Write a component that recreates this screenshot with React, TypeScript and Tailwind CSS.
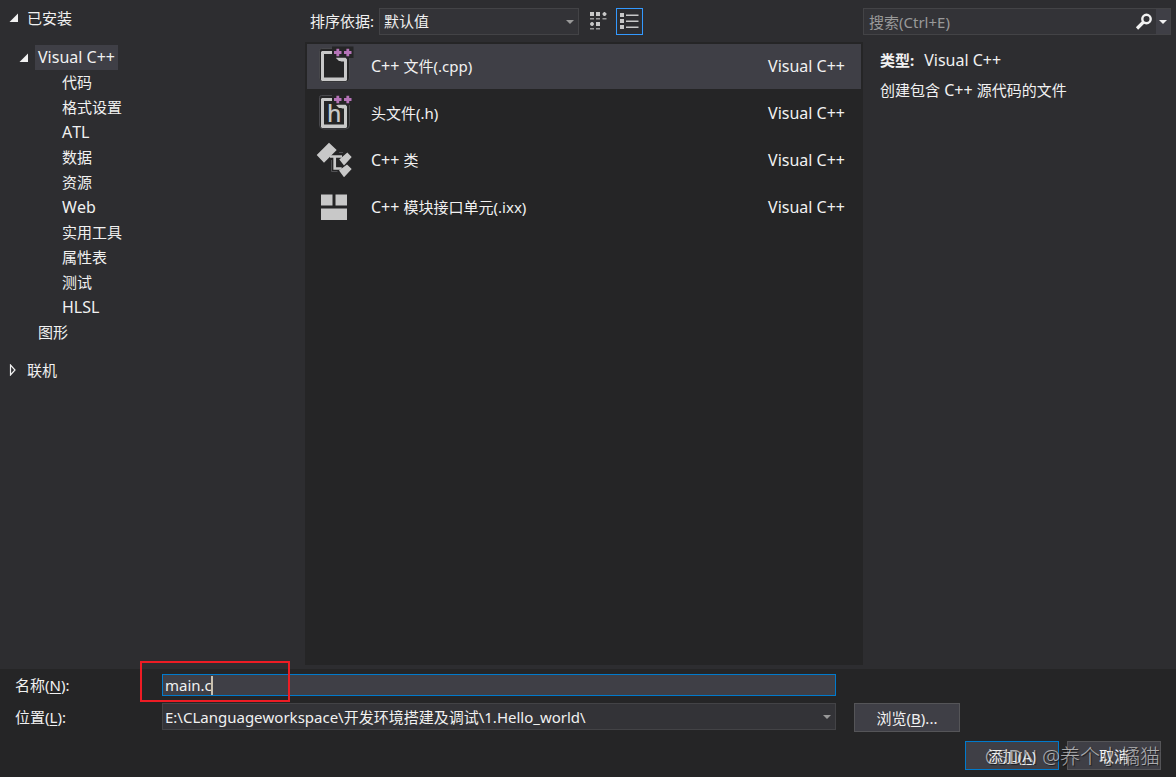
import React, { useState } from "react";

const categories = ["代码", "格式设置", "ATL", "数据", "资源", "Web", "实用工具", "属性表", "测试", "HLSL"];

const PlusPlus = () => (
  <>
    <path d="M17 2.5h21.5v11.5h-21.5z" fill="#252526" />
    <path d="M19 8.5h7.5M22.8 4.7v7.6M29 8.5h7.5M32.8 4.7v7.6" stroke="#b674b8" strokeWidth="2.8" fill="none" />
  </>
);

const PageFrame = () => (
  <>
    <path d="M6.5 4.5h28v29.5a4 4 0 0 1-4 4h-22a4 4 0 0 1-4-4v-27.5a2 2 0 0 1 2-2z" fill="#252526" stroke="#48484c" strokeWidth="1" />
    <path d="M7 7h10v3H9v23.5h20V17h-5l-3-3h9l2 2v20l-1 1h-24l-1-1V8z" fill="#c8c8c8" />
  </>
);

const CppIcon = () => (
  <svg width="40" height="45" viewBox="0 0 40 45" aria-hidden="true">
    <PageFrame />
    <PlusPlus />
    <path d="M21 13.800h9.500l1.500 1.500v2.200h-6z" fill="#c8c8c8" />
  </svg>
);

const HeaderIcon = () => (
  <svg width="40" height="45" viewBox="0 0 40 45" aria-hidden="true">
    <PageFrame />
    <PlusPlus />
    <text x="12" y="31" fontSize="23" fontWeight="500" fill="#c8c8c8">h</text>
    <path d="M22.500 13.800h8l1.500 1.500v2.200h-5z" fill="#c8c8c8" />
  </svg>
);

const ClassIcon = () => (
  <svg width="40" height="45" viewBox="0 0 40 45" aria-hidden="true">
    <path d="M16.500 22v11.500h6M24 14.500h4" stroke="#505053" strokeWidth="1" fill="none" />
    <path d="M15 18.500h12M19.700 18.500v12h7" stroke="#c8c8c8" strokeWidth="2.700" fill="none" />
    <path d="M1.700 17 14 4.700 21.700 12 9 24.700zM24.300 21.500 32.300 14.500 36.700 19 29 27.500zM24 32.500 32 26.500 36.700 31 29 39.300z" fill="#c8c8c8" />
  </svg>
);

const ModuleIcon = () => (
  <svg width="40" height="45" viewBox="0 0 40 45" aria-hidden="true">
    <path d="M6 9.500h11.500v11H6zM20.500 9.500H32v11H20.500zM6 23.500h26v11.500H6z" fill="#c8c8c8" />
  </svg>
);

const templates = [
  { prefix: "C++ ", name: "文件(.cpp)", icon: <CppIcon /> },
  { prefix: "", name: "头文件(.h)", icon: <HeaderIcon /> },
  { prefix: "C++ ", name: "类", icon: <ClassIcon /> },
  { prefix: "C++ ", name: "模块接口单元(.ixx)", icon: <ModuleIcon /> },
];

const OpenArrow = () => (
  <svg width="10" height="10" viewBox="0 0 10 10" aria-hidden="true">
    <path d="M9 0.500V9H0.500z" fill="#f1f1f1" />
  </svg>
);

const DownArrow = ({ className = "" }) => (
  <svg width="8" height="4" viewBox="0 0 8 4" className={className} aria-hidden="true">
    <path d="M0 0h8L4 4z" fill="currentColor" />
  </svg>
);

const Sidebar = () => (
  <nav className="w-[305px] shrink-0 pt-[5px]">
    <button className="flex h-[25px] items-center gap-2 pl-[9px]">
      <OpenArrow />
      <span>已安装</span>
    </button>
    <ul className="mt-[15px] mb-3">
      <li>
        <button className="flex h-[25px] items-center gap-[6px] pl-[19px]">
          <OpenArrow />
          <span className="h-[25px] bg-[#3f3f46] px-[3px] text-base leading-[25px]">Visual C++</span>
        </button>
        <ul>
          {categories.map((c) => (
            <li key={c}>
              <button className={`block h-[25px] pl-[62px] leading-[25px] ${/^[A-Z]/.test(c) ? "text-base leading-[25px]" : ""}`}>{c}</button>
            </li>
          ))}
        </ul>
      </li>
      <li>
        <button className="block h-[25px] pl-[38px] leading-[25px]">图形</button>
      </li>
    </ul>
    <button className="flex h-[25px] items-center gap-2 pl-[9px]">
      <svg width="10" height="12" viewBox="0 0 10 12" aria-hidden="true">
        <path d="M1.500 1v10L6 6z" fill="none" stroke="#f1f1f1" strokeWidth="1.200" />
      </svg>
      <span>联机</span>
    </button>
  </nav>
);

const Toolbar = () => (
  <div className="flex h-[42px] items-center pl-[5px]">
    <label htmlFor="sort" className="w-[69px]">排序依据:</label>
    <div className="relative w-[200px]">
      <select id="sort" className="block h-[27px] w-full appearance-none border border-[#434346] bg-[#333337] px-1">
        <option>默认值</option>
      </select>
      <DownArrow className="pointer-events-none absolute top-3 right-[5px] text-[#999999]" />
    </div>
    <button aria-label="中等图标" className="ml-[5px] flex h-[27px] w-[29px] items-center justify-center">
      <svg width="17" height="19" viewBox="0 0 17 19" fill="#c8c8c8">
        <path d="M0 0h4v4H0zM6 0h4v4H6zM6 10h4v4H6zM12.500 1.300h4v1.500h-4zM13.700 0h1.500v4h-1.500zM0 11.300h4v1.500H0zM1.300 10h1.500v4H1.300zM13 0.700h3v2.700h-3zM0.600 10.600h2.800v2.800H0.600z" />
        <path d="M0 6h4v1.500H0zM6 6h4v1.500H6zM12.500 6h4v1.500h-4zM0 16h4v1.500H0zM6 16h4v1.500H6z" opacity="0.700" />
      </svg>
    </button>
    <button aria-label="小图标" className="ml-[3px] flex h-[27px] w-[27px] items-center justify-center border border-[#3399ff]">
      <svg width="19" height="17" viewBox="0 0 19 17" fill="#c8c8c8">
        <path d="M0 0h4v4H0zM0 6h4v4H0zM0 12h4v4H0zM6 1.500h12.500v1.500H6zM6 7.500h12.500V9H6zM6 13.500h12.500V15H6z" />
      </svg>
    </button>
  </div>
);

const Details = () => (
  <aside className="w-[313px] shrink-0 pt-2 pr-[5px]">
    <div className="flex h-[27px] border border-[#434346] bg-[#333337]">
      <input
        type="search"
        aria-label="搜索"
        placeholder="搜索(Ctrl+E)"
        className="min-w-0 flex-1 bg-transparent px-[5px] placeholder:text-[#999999] focus:outline-none"
      />
      <button aria-label="搜索" className="flex w-[24px] items-center justify-center">
        <svg width="18" height="18" viewBox="0 0 18 18" fill="none" stroke="#f1f1f1">
          <circle cx="11.500" cy="6" r="4.200" strokeWidth="2.400" />
          <path d="M8.500 9 2 15.500" strokeWidth="3.200" />
        </svg>
      </button>
      <button aria-label="搜索选项" className="flex w-[14px] items-center justify-center bg-[#3f3f46]">
        <DownArrow />
      </button>
    </div>
    <div className="flex flex-col gap-[5px] pt-[13px] pl-[17px] leading-[25px]">
      <p className="flex gap-[10px]">
        <b>类型:</b>
        <span className="text-base leading-[25px]">Visual C++</span>
      </p>
      <p>
        创建包含<span className="text-base leading-[25px]"> C++ </span>源代码的文件
      </p>
    </div>
  </aside>
);

const App = () => {
  const [selected, setSelected] = useState(0);
  const [fileName, setFileName] = useState("main.c");

  return (
    <div className="flex min-h-screen flex-col overflow-hidden bg-[#2d2d30] font-['Noto_Sans','Noto_Sans_CJK_SC',sans-serif] text-[15px] leading-[22px] text-[#f1f1f1] [font-kerning:none]">
      <div className="flex flex-1">
        <Sidebar />
        <main className="flex min-w-0 flex-1 flex-col pb-1">
          <Toolbar />
          <ul className="flex flex-1 flex-col gap-[2px] bg-[#252526] p-[2px]">
            {templates.map((t, i) => (
              <li key={t.name}>
                <button
                  onClick={() => setSelected(i)}
                  className={`flex h-[45px] w-full items-center pr-4 pl-2 text-left ${selected === i ? "bg-[#3f3f46]" : ""}`}
                >
                  {t.icon}
                  <span className="flex-1 pb-[2px] pl-4 whitespace-pre">
                    <span className="text-base leading-[22px]">{t.prefix}</span>
                    {t.name}
                  </span>
                  <span className="pb-[2px] text-base leading-[22px]">Visual C++</span>
                </button>
              </li>
            ))}
          </ul>
        </main>
        <Details />
      </div>

      <footer className="relative bg-[#252526] pt-[5px] pr-[15px] pb-[7px] pl-[15px]">
        <div className="flex h-[22px] items-center">
          <label htmlFor="name" className="w-[147px]">
            名称(<u className="underline-offset-2">N</u>):
          </label>
          <div className="relative mr-[325px] flex-1">
            <input
              id="name"
              value={fileName}
              onChange={(e) => setFileName(e.target.value)}
              className="block h-[22px] w-full border border-[#007acc] bg-[#3f3f46] px-[2px] focus:outline-none"
            />
            {/* text cursor */}
            <span className="absolute top-[2px] left-[49px] h-[19px] w-[2px] bg-[#c8c0b0]" />
            {/* highlight round the file name */}
            <span className="pointer-events-none absolute -top-[13px] -left-[22px] h-[41px] w-[150px] border-2 border-[#ed1c24]" />
          </div>
        </div>
        <div className="mt-[7px] flex h-[29px] items-start">
          <label htmlFor="location" className="w-[147px] leading-[29px]">
            位置(<u className="underline-offset-2">L</u>):
          </label>
          <div className="relative flex-1">
            <select id="location" className="block h-[27px] w-full appearance-none border border-[#434346] bg-[#333337] px-[2px]">
              <option>E:\CLanguageworkspace\开发环境搭建及调试\1.Hello_world\</option>
            </select>
            <DownArrow className="pointer-events-none absolute top-3 right-[5px] text-[#999999]" />
          </div>
          <button className="mr-[201px] ml-[18px] h-[29px] w-[106px] border border-[#555558] bg-[#3f3f46]">
            浏览(<u className="underline-offset-2">B</u>)...
          </button>
        </div>
        <div className="mt-[9px] flex justify-end gap-2">
          <button className="h-[29px] w-[94px] border border-[#007acc] bg-[#3f3f46]">
            添加(<u className="underline-offset-2">A</u>)
          </button>
          <button className="h-[29px] w-[94px] border border-[#555558] bg-[#3f3f46]">取消</button>
        </div>
        <span className="pointer-events-none absolute right-4 bottom-[6px] text-[20px] leading-[28px] font-light whitespace-nowrap text-white/60 [text-shadow:1px_1px_1px_rgba(0,0,0,0.6)]">
          CSDN @养个小橘猫
        </span>
      </footer>
    </div>
  );
};

export default App;
